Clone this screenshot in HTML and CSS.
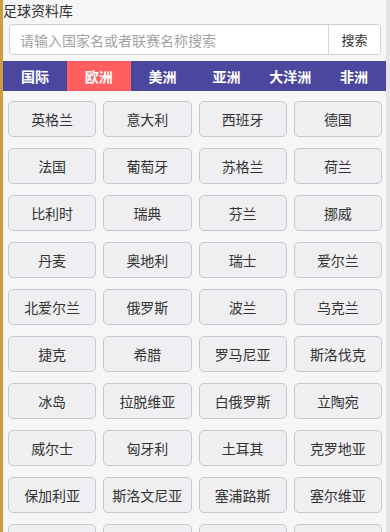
FILE: index.html
```html
<!DOCTYPE html>
<html lang="zh-CN">
<head>
    <meta charset="UTF-8">
    <meta name="viewport" content="width=device-width, initial-scale=1.0">
    <title>足球资料库</title>
    <link rel="stylesheet" href="styles.css">
</head>
<body>
<div class="page">
    <div class="page-title">足球资料库</div>
    <form class="search-box">
        <input type="text" class="search-input" placeholder="请输入国家名或者联赛名称搜索">
        <button type="submit" class="search-btn">搜索</button>
    </form>
    <div class="tabs">
        <span class="tab">国际</span>
        <span class="tab active">欧洲</span>
        <span class="tab">美洲</span>
        <span class="tab">亚洲</span>
        <span class="tab">大洋洲</span>
        <span class="tab">非洲</span>
    </div>
    <div class="country-list">
        <a class="country">英格兰</a>
        <a class="country">意大利</a>
        <a class="country">西班牙</a>
        <a class="country">德国</a>
        <a class="country">法国</a>
        <a class="country">葡萄牙</a>
        <a class="country">苏格兰</a>
        <a class="country">荷兰</a>
        <a class="country">比利时</a>
        <a class="country">瑞典</a>
        <a class="country">芬兰</a>
        <a class="country">挪威</a>
        <a class="country">丹麦</a>
        <a class="country">奥地利</a>
        <a class="country">瑞士</a>
        <a class="country">爱尔兰</a>
        <a class="country">北爱尔兰</a>
        <a class="country">俄罗斯</a>
        <a class="country">波兰</a>
        <a class="country">乌克兰</a>
        <a class="country">捷克</a>
        <a class="country">希腊</a>
        <a class="country">罗马尼亚</a>
        <a class="country">斯洛伐克</a>
        <a class="country">冰岛</a>
        <a class="country">拉脱维亚</a>
        <a class="country">白俄罗斯</a>
        <a class="country">立陶宛</a>
        <a class="country">威尔士</a>
        <a class="country">匈牙利</a>
        <a class="country">土耳其</a>
        <a class="country">克罗地亚</a>
        <a class="country">保加利亚</a>
        <a class="country">斯洛文尼亚</a>
        <a class="country">塞浦路斯</a>
        <a class="country">塞尔维亚</a>
        <a class="country">阿尔巴尼亚</a>
        <a class="country">波黑</a>
        <a class="country">马其顿</a>
        <a class="country">黑山</a>
    </div>
</div>
</body>
</html>
```

FILE: styles.css
```css
html, body {
    height: 100%;
}

body {
    margin: 0;
    font-family: "Microsoft YaHei", "Noto Sans CJK SC", sans-serif;
    font-size: 14px;
    color: #333;
    background: #f6f6f7;
    border-left: 3px solid #c9a040;
    border-right: 4px solid #e4e4e6;
    overflow: hidden;
}

.page {
    height: 100%;
}

.page-title {
    line-height: 18px;
    padding-top: 1px;
    font-size: 14px;
    color: #333;
}

.search-box {
    display: flex;
    height: 31px;
    margin: 5px 5px 0 6px;
    background: #fff;
    border: 1px solid #cfcfcf;
    border-radius: 4px;
    box-sizing: border-box;
    overflow: hidden;
}

.search-input {
    flex: 1;
    min-width: 0;
    border: none;
    outline: none;
    padding: 0 10px;
    font-family: inherit;
    font-size: 14px;
    color: #333;
    background: transparent;
}

.search-input::placeholder {
    color: #a3a3a3;
}

.search-btn {
    width: 52px;
    border: none;
    border-left: 1px solid #d6d6d6;
    background: #fff;
    font-family: inherit;
    font-size: 13px;
    color: #333;
    padding: 0;
}

.tabs {
    display: flex;
    height: 30px;
    margin-top: 6px;
    background: #4b479f;
}

.tab {
    flex: 1;
    display: flex;
    justify-content: center;
    align-items: center;
    color: #fff;
    font-weight: bold;
    font-size: 14px;
}

.tab.active {
    background: #ff5f5f;
}

.country-list {
    display: grid;
    grid-template-columns: repeat(4, 1fr);
    column-gap: 7px;
    row-gap: 11px;
    padding: 10px 4px 0 5px;
}

.country {
    display: flex;
    justify-content: center;
    align-items: center;
    height: 36px;
    box-sizing: border-box;
    background: #efeff1;
    border: 1px solid #c3cad3;
    border-radius: 5px;
    color: #333;
    font-size: 14px;
    white-space: nowrap;
}
```
